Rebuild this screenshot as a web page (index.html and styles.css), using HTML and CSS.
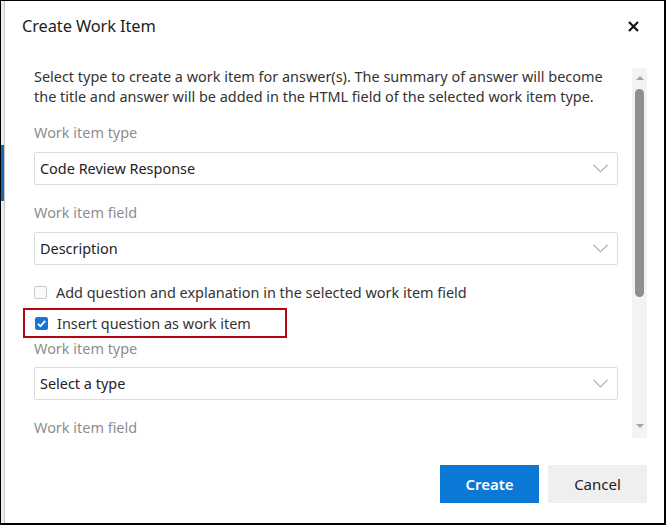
FILE: index.html
```html
<!DOCTYPE html>
<html lang="en">
<head>
<meta charset="utf-8">
<title>Create Work Item</title>
<link rel="stylesheet" href="styles.css">
</head>
<body>
<div class="frame">
  <div class="backdrop"><span class="bd-blue"></span></div>
  <div class="dialog">
    <div class="header">
      <h1 class="title">Create Work Item</h1>
      <svg class="close" width="11" height="11" viewBox="0 0 11 11"><path d="M1 1 L10 10 M10 1 L1 10" stroke="#111" stroke-width="2.2" fill="none"/></svg>
    </div>
    <div class="body">
      <div class="content">
        <p class="intro">Select type to create a work item for answer(s). The summary of answer will become the title and answer will be added in the HTML field of the selected work item type.</p>
        <div class="label l1">Work item type</div>
        <div class="select"><span>Code Review Response</span><svg class="chev" width="15" height="9" viewBox="0 0 15 9"><path d="M0.5 0.8 L7.5 7.8 L14.5 0.8" fill="none" stroke="#a6a6a6" stroke-width="1.1"/></svg></div>
        <div class="label l2">Work item field</div>
        <div class="select"><span>Description</span><svg class="chev" width="15" height="9" viewBox="0 0 15 9"><path d="M0.5 0.8 L7.5 7.8 L14.5 0.8" fill="none" stroke="#a6a6a6" stroke-width="1.1"/></svg></div>
        <div class="check-row"><span class="cb"></span><span>Add question and explanation in the selected work item field</span></div>
        <div class="highlight"><span class="cb checked"><svg width="13" height="13" viewBox="0 0 13 13"><path d="M3 6.8 L5.4 9.2 L10.2 3.8" fill="none" stroke="#fff" stroke-width="1.8"/></svg></span><span>Insert question as work item</span></div>
        <div class="label l3">Work item type</div>
        <div class="select"><span>Select a type</span><svg class="chev" width="15" height="9" viewBox="0 0 15 9"><path d="M0.5 0.8 L7.5 7.8 L14.5 0.8" fill="none" stroke="#a6a6a6" stroke-width="1.1"/></svg></div>
        <div class="label l2">Work item field</div>
      </div>
      <div class="scrollbar">
        <span class="arrow up"></span>
        <span class="thumb"></span>
        <span class="spacer"></span>
        <span class="arrow down"></span>
      </div>
    </div>
    <div class="footer">
      <button class="btn primary">Create</button>
      <button class="btn">Cancel</button>
    </div>
  </div>
</div>
</body>
</html>
```
FILE: styles.css
```css
* { box-sizing: border-box; }
html, body { margin: 0; padding: 0; background: #fff; }
body { font-family: "Segoe UI", "Noto Sans", "Open Sans", sans-serif; }
.frame {
  width: 666px; height: 525px;
  border: 1px solid #000;
  border-right-width: 2px; border-bottom-width: 2px;
  display: flex;
  overflow: hidden;
}
.backdrop {
  width: 3px; background: #ececec;
  display: flex; flex-direction: column;
}
.bd-blue { display: block; margin-top: 144px; height: 56px; background: #1866b4; }
.dialog {
  flex: 1;
  border-left: 1px solid #c8c8c8;
  padding: 12px 17px 0 17px;
  display: flex; flex-direction: column;
  background: #fff;
}
.header { display: flex; justify-content: space-between; align-items: center; height: 26px; }
.title { margin: 0; font-size: 16.4px; font-weight: 400; color: #222; line-height: 24px; letter-spacing: -0.1px; }
.close { margin-right: 8px; margin-top: 1px; }
.body { margin-top: 29px; height: 370px; display: flex; }
.content { flex: 1; padding: 0 14px 0 12px; overflow: hidden; }
.intro { margin: -1px 0 0 0; font-size: 14.45px; line-height: 20px; color: #333; }
.label { font-size: 14.45px; line-height: 20px; color: #8d8d8d; margin-bottom: 9px; }
.l1 { margin-top: 16px; }
.l2 { margin-top: 18px; }
.l3 { margin-top: 1px; margin-bottom: 8px; }
.select {
  height: 33px; border: 1px solid #dcdcdc; border-radius: 2px;
  display: flex; align-items: center; justify-content: space-between;
  padding: 0 9px 0 5px; font-size: 14.45px; color: #222;
}
.check-row { display: flex; align-items: center; margin-top: 17px; height: 20px; font-size: 14.45px; color: #333; }
.cb {
  width: 13px; height: 13px; border: 1px solid #c9c9c9; border-radius: 2px; background: #fafafa;
  margin: 0 9px 0 0; flex: none; display: flex;
}
.cb.checked { background: #1a73d9; border-color: #1a73d9; }
.cb.checked svg { margin: -1px; }
.highlight {
  display: flex; align-items: center;
  width: 264px; height: 30px; margin: 6px 0 0 -11px;
  border: 2px solid #b5050f; padding: 0 0 0 10px;
  font-size: 14.45px; color: #333;
}
.scrollbar {
  width: 15px; background: #f3f3f3;
  display: flex; flex-direction: column; align-items: center;
}
.arrow { width: 0; height: 0; border-left: 4px solid transparent; border-right: 4px solid transparent; }
.arrow.up { margin-top: 8px; border-bottom: 4px solid #a3a3a3; }
.arrow.down { margin-bottom: 10px; border-top: 4px solid #a3a3a3; }
.thumb { width: 9px; height: 208px; margin-top: 9px; background: #8f8f8f; border-radius: 5px; }
.spacer { flex: 1; }
.footer { display: flex; justify-content: flex-end; gap: 9px; margin-top: 27px; }
.btn {
  width: 99px; height: 38px; border: none; border-radius: 0;
  background: #efefef; color: #222; font-family: inherit; font-size: 15px;
}
.btn.primary { background: #0a78d4; color: #fff; font-weight: 600; }
```
